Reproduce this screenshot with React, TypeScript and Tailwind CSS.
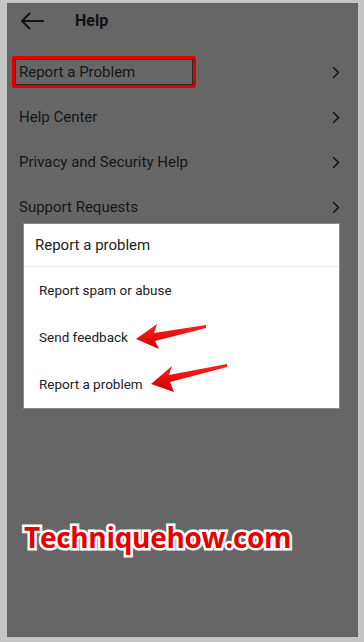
import React from 'react';

const menuItems = ['Report a Problem', 'Help Center', 'Privacy and Security Help', 'Support Requests'];
const dialogItems = ['Report spam or abuse', 'Send feedback', 'Report a problem'];

function Chevron() {
  return (
    <svg width="8" height="13" viewBox="0 0 8 13" fill="none">
      <path d="M1.5 1.5 L6.5 6.5 L1.5 11.5" stroke="#151515" strokeWidth="1.6" strokeLinecap="round" strokeLinejoin="round" />
    </svg>
  );
}

function BackArrow() {
  return (
    <svg width="24" height="18" viewBox="0 0 24 18" fill="none">
      <path d="M23 9 H2 M9.5 1.5 L2 9 L9.5 16.5" stroke="#121212" strokeWidth="2" strokeLinecap="round" strokeLinejoin="round" />
    </svg>
  );
}

export default function App() {
  return (
    <div className="w-[364px] h-[642px] bg-[#c6c6c6] pt-[3px] pl-[7px] pr-[6px] pb-[5px] font-['Roboto','Liberation_Sans',sans-serif]">
      <div className="relative h-full bg-[#666666] overflow-hidden">
        {/* header */}
        <div className="h-[36px] flex items-center">
          <div className="ml-[13px] w-[24px] flex items-center">
            <BackArrow />
          </div>
          <span className="ml-[31px] text-[16px] font-bold text-[#121212]">Help</span>
        </div>

        {/* menu list */}
        <div className="mt-[11px]">
          {menuItems.map((item) => (
            <div key={item} className="h-[45px] flex items-center justify-between pl-[12px] pr-[18px]">
              <span className="text-[15px] text-[#161616]">{item}</span>
              <Chevron />
            </div>
          ))}
        </div>

        {/* annotation box */}
        <div className="absolute left-[5px] top-[53px] w-[184px] h-[32px] border-[3px] border-[#e00000] rounded-[2px]">
          <div className="h-full w-full border border-[#2a2a2a]" />
        </div>

        {/* dialog */}
        <div className="absolute left-[16px] top-[220px] w-[317px] h-[186px] bg-white border border-[#8a8a8a]">
          <div className="h-[43px] flex items-center pl-[11px] border-b border-[#ececec]">
            <span className="text-[15px] text-[#222222]">Report a problem</span>
          </div>
          {dialogItems.map((item) => (
            <div key={item} className="h-[47px] flex items-center pl-[15px]">
              <span className="text-[13.5px] text-[#222222]">{item}</span>
            </div>
          ))}
        </div>

        {/* red arrows */}
        <svg className="absolute left-0 top-0" width="351" height="634" viewBox="7 3 351 634">
          <defs>
            <linearGradient id="arrowRed" x1="0" y1="0" x2="0" y2="1">
              <stop offset="0" stopColor="#ff2020" />
              <stop offset="1" stopColor="#d00000" />
            </linearGradient>
          </defs>
          <polygon
            points="136,339 157,324 154,333 206,325 206,328 155,341 159,349"
            fill="url(#arrowRed)"
          />
          <polygon
            points="151,384 172,366 169,375 227,364 227,367 170,382 174,392"
            fill="url(#arrowRed)"
          />
        </svg>

        {/* watermark */}
        <div className="absolute left-[17px] top-[514px] text-[28px] font-bold leading-[40px] text-[#e60000] font-['Open_Sans','Noto_Sans',sans-serif] [-webkit-text-stroke:5px_white] [paint-order:stroke_fill] tracking-[-0.3px]">
          Techniquehow.com
        </div>
      </div>
    </div>
  );
}
